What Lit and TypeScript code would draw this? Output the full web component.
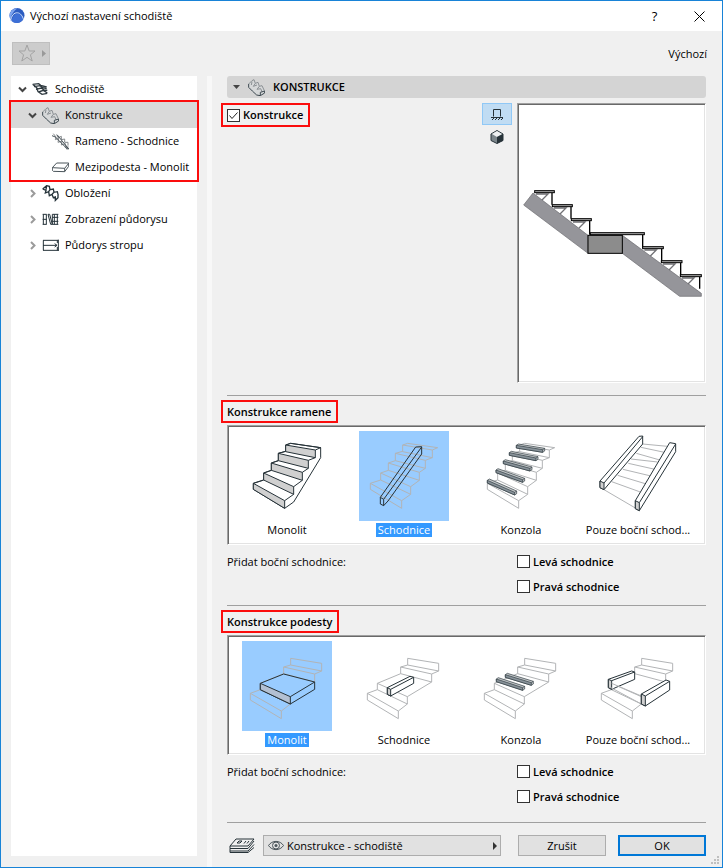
import { LitElement, html, svg, css, nothing } from "lit";
import { customElement, property } from "lit/decorators.js";
import { classMap } from "lit/directives/class-map.js";

/* ---- Thumbnails: every drawing shares one 270-unit square ---- */

const flight = "M197 165L212 160L302 173L286 180ZM197 165V185L286 203V180M197 184L175 190L265 211L286 203M175 190V212L265 235V211M175 212L154 219L247 247L265 235M154 219V241L247 271V247M154 241L131 249L221 290L247 271M131 249V270L221 313V290M131 270L100 280L194 332L221 313M100 280V298L194 355V332";
const landing = "M212 175L305 190V213L212 195ZM212 195L191 201L284 222L305 213M191 201V221L284 246V222M191 221L121 250L211 290L284 246M121 250V269L211 312V290M121 269L91 280L184 333L211 312M91 280V300L184 356V333";

const bar = (x1: number, y1: number, x2: number, y2: number) => svg`
  <path class="thin solid" d="M${x1} ${y1}l6 -4L${x2 + 6} ${y2 - 4}v8l-6 4L${x1} ${y1 + 8}z"/>
  <path class="thin slate" d="M${x1} ${y1}L${x2} ${y2}v8L${x1} ${y1 + 8}z"/>
  <path class="thin" d="M${x2} ${y2}l6 -4"/>`;

const drawings: Record<string, unknown> = {
  flightMonolith: svg`
    <path class="dark white" d="M197 165L212 160L302 173V203L221 336L194 355L100 298V280L131 270V249L154 241V219L175 212V190L197 184Z"/>
    <path class="shade" d="M197 165V185L286 203V180ZM175 190V212L265 235V211ZM154 219V241L247 271V247ZM131 249V270L221 313V290ZM100 280V298L194 355V332Z"/>
    <path class="dark" d="${flight}"/>`,
  flightStringer: svg`
    <path class="pale" d="${flight}"/>
    <path class="dark" d="M130 322L236 171L254 170V192L153 333L140 347L130 342ZM130 322L140 328V347M140 328L254 171"/>`,
  flightCantilever: svg`
    <path class="pale" d="${flight}"/>
    ${bar(187, 166, 266, 179)}${bar(166, 188, 246, 204)}${bar(148, 213, 228, 235)}${bar(126, 240, 206, 269)}${bar(100, 271, 182, 307)}`,
  flightSides: svg`
    <path class="pale" d="M215 162L300 170M210 172L285 188M196 190L270 211M180 207L260 216M172 220L252 238M156 238L240 258M140 256L226 282M122 275L208 306M99 299L193 354"/>
    <path class="dark white" d="M87 273L204 139L215 138V162L99 299L87 293Z"/>
    <path class="dark shade" d="M87 273L99 279V299L87 293Z"/>
    <path class="dark" d="M99 279L215 140"/>
    <path class="dark white" d="M193 332L296 158L314 161V185L205 362L193 356Z"/>
    <path class="dark shade" d="M193 332L205 338V362L193 356Z"/>
    <path class="dark" d="M205 338L314 162"/>`,
  landingMonolith: svg`
    <path class="pale" d="${landing}"/>
    <path class="dark blue" d="M121 250L191 222L284 246V268L211 312L121 269Z"/>
    <path class="dark steel" d="M121 250L211 290V312L121 269Z"/>
    <path class="dark" d="M211 290L284 246"/>`,
  landingStringer: svg`
    <path class="pale" d="${landing}"/>
    <path class="dark white" d="M151 263L219 229L230 232V250L161 288L151 283Z"/>
    <path class="dark shade" d="M151 263L161 268V288L151 283Z"/>
    <path class="dark" d="M161 268L230 232"/>`,
  landingCantilever: svg`
    <path class="pale" d="${landing}"/>
    ${bar(154, 224, 232, 248)}${bar(127, 237, 206, 263)}`,
  landingSides: svg`
    <path class="pale" d="${landing}"/>
    <path class="dark white" d="M112 238L182 213L191 216V238L122 268L112 263Z"/>
    <path class="dark shade" d="M112 238L122 242V268L112 263Z"/>
    <path class="dark" d="M122 242L191 216"/>
    <path class="pale" d="M122 250L211 288M118 262L211 312"/>
    <path class="dark white" d="M211 282L285 240L296 244V270L223 318L211 312Z"/>
    <path class="dark shade" d="M211 282L223 288V318L211 312Z"/>
    <path class="dark" d="M223 288L296 244"/>`,
};

/* ---- Small icons, three units to the pixel ---- */

const structureIcon = svg`
  <path d="M1 14L12 4L18 3L24 12L30 11L36 20L41 22L48 34L50 40L36 50L24 47L10 34L2 24Z" fill="#d6d8d9"/>
  <path d="M2 15L12 5L18 2L22 13L30 10L34 22L42 20L49 35M10 18L12 8M22 13L16 22M34 22L27 31M16 22L27 18M27 31L38 29M38 29L42 38" stroke="#8b9094" fill="none" stroke-width="3"/>
  <path d="M2 15V25L13 36L26 48L37 50V40M37 50L50 42V36L37 40" stroke="#3c484f" fill="none" stroke-width="3"/>`;

const treeIcons: Record<string, unknown> = {
  stair: svg`<path d="M2 10L20 8L26 13L44 18M6 17L24 14L32 20L44 23M12 25L28 21L36 27L46 28M20 33L34 28L46 36M2 10L14 20L18 32L30 40L46 37" fill="none" stroke="#2f3a40" stroke-width="4"/>`,
  structure: structureIcon,
  flight: svg`<path d="M4 2L12 12L10 20L20 16L18 28L30 24L28 36L40 32L40 44L50 42M14 4L18 14L28 10L28 20L38 18L38 28L48 28L48 38" fill="none" stroke="#858a8d" stroke-width="3"/><path d="M0 8L10 12L44 46M16 6L50 48M42 38L50 48L42 47" fill="none" stroke="#4b555b" stroke-width="3"/>`,
  slab: svg`<path d="M1 26L14 12H50V22L38 38L4 37L1 34ZM1 26L38 28L50 13M38 28V38" fill="#fff" stroke="#4b555b" stroke-width="3"/>`,
  finish: svg`<path d="M2 12L14 2L22 4L24 14L34 12L36 22L46 20L49 32M2 12L12 16L10 24L20 20L22 32L30 28L34 38L40 36L40 46L48 38V30M14 2L12 14M24 14L20 20M36 22L30 28" fill="none" stroke="#243239" stroke-width="4"/>`,
  plan: svg`<path d="M2 10H14M2 40H14M2 25H14M4 10V40M13 10V40M18 10H23L31 40H26ZM31 10V40M31 10H49M31 19H49M31 31H49M31 40H49M37 10V40M46 10V40" fill="none" stroke="#243239" stroke-width="3"/>`,
  ceiling: svg`<path d="M3 10H49M3 25H44M3 40H49M4 10V40M46 10V18M46 30V40M38 20L45 25L38 30M49 8V42" fill="none" stroke="#243239" stroke-width="3"/>`,
};

const icon = (art: unknown) => html`<svg class="icon" viewBox="0 0 51 51" aria-hidden="true">${art}</svg>`;

type Node = { text: string; icon: string; level: number; open?: boolean; active?: boolean };

const row = (n: Node) => html`
  <li><button class=${classMap({ node: true, [`level${n.level}`]: true, active: !!n.active })}>
    ${n.open === undefined ? nothing : html`<svg class=${classMap({ chevron: true, closed: !n.open })} viewBox="0 0 9 9" aria-hidden="true"><path d=${n.open ? "M1 2.5L4.500 6L8 2.500" : "M3 1L6.500 4.500L3 8"}/></svg>`}
    ${icon(treeIcons[n.icon])}<span>${n.text}</span>
  </button></li>`;

@customElement("stair-gallery")
export class StairGallery extends LitElement {
  @property() heading = "";
  @property() name = "";
  @property({ type: Number }) selected = 0;
  @property({ attribute: false }) art: string[] = [];

  static styles = css`
    :host { display: block; border-top: 1px solid #a0a0a0; padding: 4px 0 6px; }
    * { box-sizing: border-box; }
    h2 { margin: 0 0 2px -6px; width: fit-content; height: 23px; padding: 0 5px 0 4px; border: 2px solid #fb0d0d; font-size: 11px; line-height: 20px; font-weight: 600; }
    .list { display: grid; grid-template-columns: repeat(4, 1fr); column-gap: 27px; height: 120px; padding: 4px 22px 0 14px; background: #fff; border: 1px solid; border-color: #a0a0a0 #fff #fff #a0a0a0; box-shadow: inset 1px 1px #696969, inset -1px -1px #e3e3e3; }
    .item { position: relative; display: flex; flex-direction: column; align-items: center; gap: 2px; min-width: 0; padding-top: 1px; }
    .item input { position: absolute; opacity: 0; }
    .art { width: 90px; height: 90px; }
    .item span { padding: 0 2px; font-size: 11px; line-height: 14px; white-space: nowrap; }
    .item.on .art { background: #99ccff; }
    .item.on span { background: #3399ff; color: #fff; }
    path { fill: none; stroke-width: 3; stroke-linejoin: round; }
    .dark { stroke: #263238; }
    .thin { stroke: #2c383e; stroke-width: 2; }
    .pale { stroke: #b2b4b6; }
    .white { fill: #fff; }
    .shade { fill: #d0d0d0; }
    .blue { fill: #99ccff; }
    .steel { fill: #b3c0d2; }
    .solid { fill: #c4c8ca; }
    .slate { fill: #89939a; }
    .sides { display: grid; grid-template-columns: 1fr 189px; grid-auto-rows: 25px; align-items: center; padding-top: 4px; }
    .sides label { grid-column: 2; display: flex; align-items: center; gap: 3px; font-weight: 600; }
    .sides input { appearance: none; margin: 0; width: 13px; height: 13px; border: 1px solid #333; background: #fff; }
  `;

  render() {
    const names = ["Monolit", "Schodnice", "Konzola", "Pouze boční schod..."];
    return html`
      <h2>${this.heading}</h2>
      <div class="list" role="radiogroup" aria-label=${this.heading}>
        ${names.map((text, i) => html`
          <label class=${classMap({ item: true, on: i === this.selected })}>
            <input type="radio" name=${this.name} .checked=${i === this.selected} @change=${() => (this.selected = i)}>
            <svg class="art" viewBox="66 123 270 270" aria-hidden="true">${drawings[this.art[i]]}</svg>
            <span>${text}</span>
          </label>`)}
      </div>
      <div class="sides">
        <span>Přidat boční schodnice:</span>
        <label><input type="checkbox">Levá schodnice</label>
        <label><input type="checkbox">Pravá schodnice</label>
      </div>`;
  }
}

@customElement("app-root")
export class AppRoot extends LitElement {
  static styles = css`
    :host { position: relative; display: flex; flex-direction: column; box-sizing: border-box; min-height: 100vh; border: 1px solid #1883d7; background: #f0f0f0; color: #000; font: 11px/14px "Open Sans", "Noto Sans", sans-serif; }
    * { box-sizing: border-box; }
    button, select { font: inherit; color: inherit; padding: 0; border: 0; background: none; }
    ul { list-style: none; margin: 0; padding: 0; }
    .titlebar { display: flex; align-items: center; height: 30px; padding-left: 8px; background: #fff; }
    .titlebar h1 { flex: 1; margin: 0 0 0 5px; font-size: 11px; line-height: 16px; font-weight: 400; }
    .titlebar button { width: 45px; height: 30px; display: grid; place-items: center; font-size: 13px; }
    .logo { width: 16px; height: 16px; }
    .close { width: 11px; height: 11px; }
    .toolbar { display: flex; justify-content: space-between; align-items: center; height: 45px; padding: 0 15px 0 11px; }
    .favorite { width: 38px; height: 23px; border: 1px solid #bfbfbf; background: #ccc; }
    .favorite svg { display: block; width: 36px; height: 21px; }
    .content { flex: 1; display: flex; padding: 0 16px 11px 10px; }
    .tree { width: 186px; flex: none; background: #fff; }
    .splitter { width: 5px; flex: none; margin: 0 15px -11px 10px; background: #f8f8f8; }
    .marked { position: relative; outline: 2px solid #fb0d0d; }
    .node { display: flex; align-items: center; width: 100%; height: 26px; padding-left: 7px; white-space: nowrap; text-align: left; }
    .active { background: #d9d9d9; }
    .level1 { padding-left: 17px; }
    .level2 { padding-left: 41px; }
    .chevron { width: 9px; height: 9px; margin-right: 5px; fill: none; stroke: #444; stroke-width: 2; }
    .closed { stroke: #9b9b9b; }
    .icon { width: 17px; height: 17px; margin-right: 6px; flex: none; }
    .main { flex: 1; min-width: 0; display: flex; flex-direction: column; }
    .section { display: flex; align-items: center; height: 22px; padding-left: 6px; border-radius: 3px; background: #d4d4d4; font-weight: 600; }
    .section .icon { margin-right: 8px; }
    .triangle { width: 7px; height: 4px; margin-right: 8px; }
    .setup { display: grid; grid-template-columns: 1fr 30px 189px; column-gap: 5px; padding: 5px 0 12px; align-items: start; }
    .enable { display: flex; align-items: center; gap: 3px; width: fit-content; height: 24px; margin-left: -6px; padding: 0 5px 0 4px; border: 2px solid #fb0d0d; font-weight: 600; }
    .check { display: grid; width: 13px; height: 13px; }
    .check > * { grid-area: 1 / 1; }
    .check input { appearance: none; margin: 0; width: 13px; height: 13px; border: 1px solid #333; background: #fff; }
    .check svg { width: 13px; height: 13px; pointer-events: none; fill: none; stroke: #222; }
    .views { display: flex; flex-direction: column; gap: 1px; }
    .views button { height: 22px; display: grid; place-items: center; }
    .views .on { border: 1px solid #90c8f6; background: #c0dcf3; }
    .views svg { width: 14px; height: 14px; }
    .preview { height: 280px; display: grid; place-items: center; background: #fff; border: 1px solid; border-color: #a0a0a0 #fff #fff #a0a0a0; box-shadow: inset 1px 1px #696969, inset -1px -1px #e3e3e3; }
    .preview svg { width: 187px; height: 276px; }
    .footer { display: grid; grid-template-columns: 36px 1fr 88px 88px; align-items: center; margin-top: auto; padding-top: 12px; border-top: 1px solid #a0a0a0; }
    .layers { width: 26px; height: 16px; margin-left: 2px; }
    .combo { position: relative; height: 21px; margin-right: 17px; }
    .combo select { appearance: none; width: 100%; height: 21px; padding: 0 20px 0 23px; border: 1px solid #adadad; background: #e1e1e1; line-height: 14px; }
    .eye { position: absolute; left: 5px; top: 5px; width: 16px; height: 11px; pointer-events: none; }
    .arrow { position: absolute; right: 4px; top: 7px; width: 4px; height: 8px; pointer-events: none; }
    .push { height: 21px; border: 1px solid #adadad; background: #e1e1e1; }
    .primary { border: 2px solid #0078d7; }
    .footer { grid-template-columns: 36px 1fr 88px 88px; }
    .actions { display: grid; grid-template-columns: 88px 88px; gap: 12px; }
    .footer { grid-template-columns: 36px 1fr auto; }
    .grip { position: absolute; right: 3px; bottom: 3px; width: 8px; height: 8px; }
  `;

  render() {
    const treads = [[60, 32, 59], [113, 74, 60], [170, 116, 60], [227, 158, 162], [384, 200, 62], [440, 242, 62], [497, 284, 63]];
    const brackets = [[60, 38], [114, 80], [171, 122], [385, 206], [441, 248], [498, 290]];
    return html`
      <header class="titlebar">
        <svg class="logo" viewBox="0 0 16 16" aria-hidden="true"><circle cx="8" cy="7.500" r="7.500" fill="#2c5cc0"/><path d="M.500 9C0 4 4 0 8.500 .200C5 2.500 2.500 6 1.500 11Z" fill="#7ba3ee"/><path d="M2.500 13C3.500 8.500 5.500 5.500 8.500 5.500C11 5.500 13 7.500 14 11.500C11.500 15.500 5.500 16 2.500 13Z" fill="#3d6fd6"/><path d="M1.500 13C2.500 7.500 5 4.500 8.500 4.800C11.500 5 13.500 8 14.500 11.500" fill="none" stroke="#cfdffb"/></svg>
        <h1>Výchozí nastavení schodiště</h1>
        <button aria-label="Nápověda">?</button>
        <button aria-label="Zavřít"><svg class="close" viewBox="0 0 11 11"><path d="M.500 .500L10.500 10.500M10.500 .500L.500 10.500" stroke="#000"/></svg></button>
      </header>
      <div class="toolbar">
        <button class="favorite" aria-label="Oblíbené"><svg viewBox="0 0 36 21"><path d="M14 2L16.200 8H22L17.400 11.800L19.200 18L14 14.300L8.800 18L10.600 11.800L6 8H11.800Z" fill="none" stroke="#a3a3a3"/><path d="M29 7L33 10.500L29 14Z" fill="#999"/></svg></button>
        <span>Výchozí</span>
      </div>
      <div class="content">
        <nav class="tree"><ul>
          ${row({ text: "Schodiště", icon: "stair", level: 0, open: true })}
          <li><ul class="marked">
            ${row({ text: "Konstrukce", icon: "structure", level: 1, open: true, active: true })}
            ${row({ text: "Rameno - Schodnice", icon: "flight", level: 2 })}
            ${row({ text: "Mezipodesta - Monolit", icon: "slab", level: 2 })}
          </ul></li>
          ${row({ text: "Obložení", icon: "finish", level: 1, open: false })}
          ${row({ text: "Zobrazení půdorysu", icon: "plan", level: 1, open: false })}
          ${row({ text: "Půdorys stropu", icon: "ceiling", level: 1, open: false })}
        </ul></nav>
        <div class="splitter"></div>
        <main class="main">
          <button class="section"><svg class="triangle" viewBox="0 0 7 4" aria-hidden="true"><path d="M0 0H7L3.500 4Z" fill="#444"/></svg>${icon(structureIcon)}KONSTRUKCE</button>
          <div class="setup">
            <label class="enable"><span class="check"><input type="checkbox" checked><svg viewBox="0 0 13 13"><path d="M2.500 6.500L5 9.500L10.500 3.500"/></svg></span>Konstrukce</label>
            <div class="views">
              <button class="on" aria-label="Pohled"><svg viewBox="0 0 14 14"><path d="M3.500 9.500V2.500H10.500V9.500M1 10.500H13M2 13L4 11M5 13L7 11M8 13L10 11M11 13L13 11" fill="none" stroke="#263238"/></svg></button>
              <button aria-label="3D"><svg viewBox="0 0 14 14"><path d="M7 .500L13 4V10.500L7 13.500L1 10.500V4Z" fill="#7b858a" stroke="#263238"/><path d="M7 1L12 4L7 7L2 4Z" fill="#eef0f1"/><path d="M7 7L13 4V10.500L7 13.500Z" fill="#263238"/></svg></button>
            </div>
            <div class="preview"><svg viewBox="10 -225 561 828" role="img" aria-label="Náhled schodiště">
              <path d="M27 75L55 39L220 166V220ZM323 166L560 340V349H495L323 220Z" fill="#95959a" stroke="#68686c" stroke-width="2"/>
              <rect x="220" y="166" width="103" height="54" fill="#8c8c8c" stroke="#000" stroke-width="3"/>
              ${brackets.map(([x, y]) => svg`<path d="M${x + 4} ${y + 4}H${x + 40}L${x + 22} ${y + 22}" fill="none" stroke="#707074" stroke-width="4"/>`)}
              <path d="M112 38V74M169 80V116M225 122V164M384 164V205M441 206V247M498 248V289M555 290V326" stroke="#000" stroke-width="4" fill="none"/>
              ${treads.map(([x, y, w]) => svg`<rect x=${x} y=${y} width=${w} height="6" fill="#aaa" stroke="#000" stroke-width="3"/>`)}
            </svg></div>
          </div>
          <stair-gallery heading="Konstrukce ramene" name="flight" .selected=${1} .art=${["flightMonolith", "flightStringer", "flightCantilever", "flightSides"]}></stair-gallery>
          <stair-gallery heading="Konstrukce podesty" name="landing" .selected=${0} .art=${["landingMonolith", "landingStringer", "landingCantilever", "landingSides"]}></stair-gallery>
          <footer class="footer">
            <svg class="layers" viewBox="0 0 26 16" aria-hidden="true"><path d="M1 8L7 1H25L19 8ZM1 8V10.500H19L25 3M1 10.500V13H19L25 6.500M1 13V14.500H19L25 9.500M8 5L10 3H13L11 5ZM15 5.500L17 3M18 5.500L20 3" fill="none" stroke="#263238"/></svg>
            <div class="combo">
              <select aria-label="Hladina"><option>Konstrukce - schodiště</option></select>
              <svg class="eye" viewBox="0 0 16 11" aria-hidden="true"><path d="M.500 5.500C4 0 12 0 15.500 5.500C12 11 4 11 .500 5.500Z" fill="none" stroke="#4b555b"/><circle cx="8" cy="5.500" r="3.500" fill="none" stroke="#4b555b"/><circle cx="8" cy="5.500" r="1.500" fill="#4b555b"/></svg>
              <svg class="arrow" viewBox="0 0 4 8" aria-hidden="true"><path d="M0 0L4 4L0 8Z" fill="#333"/></svg>
            </div>
            <div class="actions">
              <button class="push">Zrušit</button>
              <button class="push primary">OK</button>
            </div>
          </footer>
        </main>
      </div>
      <svg class="grip" viewBox="0 0 8 8" aria-hidden="true"><path d="M6 0h2v2H6zM3 3h2v2H3zM6 3h2v2H6zM0 6h2v2H0zM3 6h2v2H3zM6 6h2v2H6z" fill="#bfbfbf"/></svg>
    `;
  }
}
